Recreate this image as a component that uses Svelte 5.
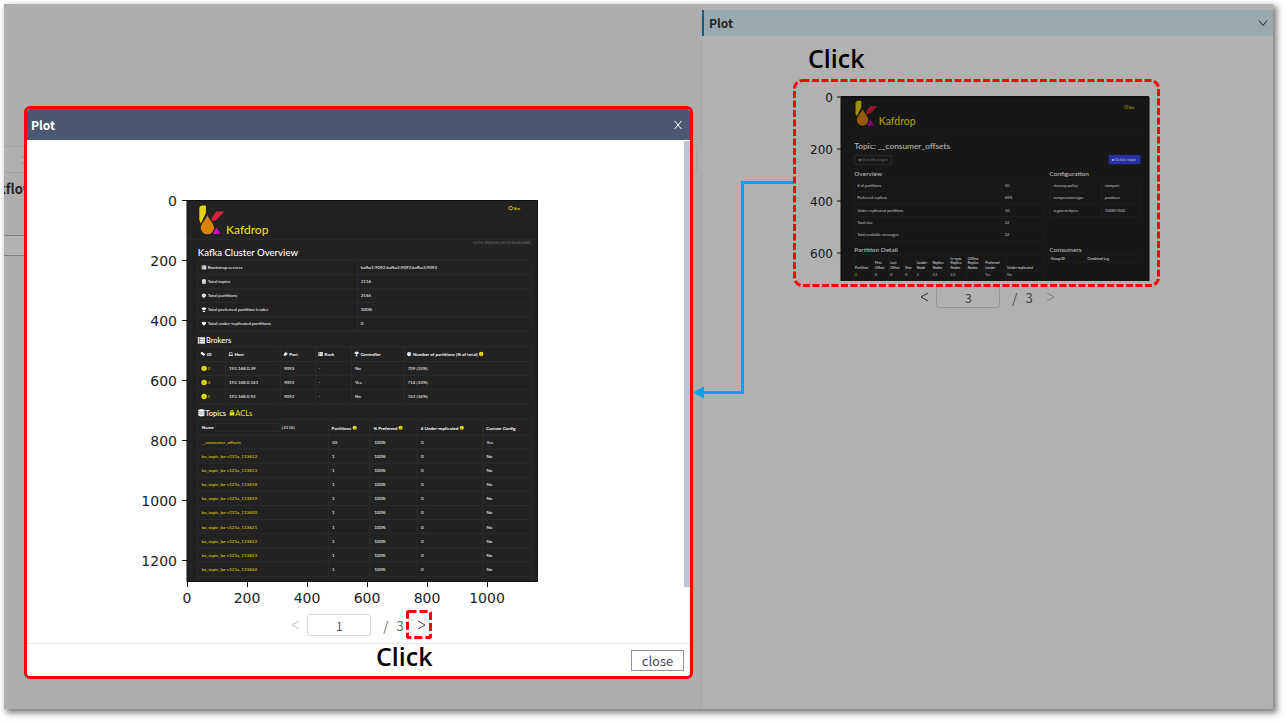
<script>
  let modalPage = $state('1');
  let panelPage = $state('3');

  const summary = [
    ['list', 'Bootstrap servers', 'kafka1:9092,kafka2:9092,kafka3:9092'],
    ['db', 'Total topics', '2116'],
    ['pie', 'Total partitions', '2165'],
    ['cup', 'Total preferred partition leader', '100%'],
    ['heart', 'Total under-replicated partitions', '0']
  ];
  const brokerHeads = [
    ['tag', 'ID', 46], ['laptop', 'Host', 138], ['plug', 'Port', 321],
    ['list', 'Rack', 438], ['cup', 'Controller', 558], ['pie', 'Number of partitions (% of total)', 733]
  ];
  const brokers = [
    ['2', '192.168.0.39', '9092', '-', 'No', '709 (33%)'],
    ['3', '192.168.0.161', '9092', '-', 'Yes', '714 (33%)'],
    ['1', '192.168.0.92', '9092', '-', 'No', '742 (34%)']
  ];
  const brokerCols = [68, 140, 323, 438, 560, 735];
  const topics = [
    ['__consumer_offsets', '50', 'Yes'],
    ...['12', '13', '18', '19', '20', '21', '22', '23', '24'].map((n) => [`ba_topic_ba-v121a_1136${n}`, '1', 'No'])
  ];
  const overview = [
    ['# of partitions', '50'],
    ['Preferred replicas', '68%'],
    ['Under-replicated partitions', '10'],
    ['Total size', '22'],
    ['Total available messages', '22']
  ];
  const config = [
    ['cleanup.policy', 'compact'],
    ['compression.type', 'producer'],
    ['segment.bytes', '104857600']
  ];
  const detailHeads = [
    [54, ['Partition']], [131, ['First', 'Offset']], [189, ['Last', 'Offset']], [247, ['Size']],
    [291, ['Leader', 'Node']], [352, ['Replica', 'Nodes']], [421, ['In-sync', 'Replica', 'Nodes']],
    [487, ['Offline', 'Replica', 'Nodes']], [554, ['Preferred', 'Leader']], [639, ['Under-replicated']]
  ];
  const detailRow = [[131, '0'], [189, '0'], [247, '0'], [291, '2'], [352, '2,3'], [421, '2,3'], [554, 'Yes'], [639, 'No']];
</script>

{#snippet chevron(d)}
  <svg class="chevron" viewBox="0 0 10 10" aria-hidden="true"><path {d} /></svg>
{/snippet}

{#snippet glyph(kind, x, y, s)}
  <g transform="translate({x} {y}) scale({s / 16})">
    {#if kind === 'list'}
      <path d="M0 1h16v14H0z" />
      <path class="cut" d="M0 5.5h16M0 10h16M4 1v14" />
    {:else if kind === 'db'}
      <path d="M1 3c0-4 14-4 14 0v10c0 4-14 4-14 0z" />
      <path class="cut" d="M1 5c2 2 12 2 14 0M1 9.5c2 2 12 2 14 0" />
    {:else if kind === 'pie'}
      <circle cx="8" cy="8" r="7.5" />
      <path class="cut" d="M8 8V0M8 8l7 3" />
    {:else if kind === 'cup'}
      <path d="M3 0h10v2h3c0 4-2 6-5 6l-2 2v3h3v3H4v-3h3v-3L5 8C2 8 0 6 0 2h3z" />
    {:else if kind === 'heart'}
      <path d="M8 15L1 8C-2 3 5-2 8 3c3-5 10 0 7 5z" />
    {:else if kind === 'tag'}
      <path d="M0 1h7l9 8-6 6-10-8z" />
    {:else if kind === 'laptop'}
      <path d="M2 2h12v9h2v3H0v-3h2zm2 2v6h8V4z" fill-rule="evenodd" />
    {:else if kind === 'plug'}
      <path d="M10 0l2 2-3 3 2 2 3-3 2 2-4 4c-1 4-5 5-8 3l-3 3-1-1 3-3c-2-3-1-7 3-8z" />
    {:else if kind === 'info'}
      <circle class="gold" cx="8" cy="8" r="8" />
      <path class="cut" d="M8 3v2M8 7v6" />
    {:else if kind === 'lock'}
      <path class="gold" d="M1 7h2V5c0-7 10-7 10 0v2h2v9H1zm5 0h4V5c0-3-4-3-4 0z" fill-rule="evenodd" />
    {/if}
  </g>
{/snippet}

{#snippet brand(dx)}
  <g transform="translate({dx} 0)">
    <path fill="#e3d600" d="M41 28Q41 20 49 18H63V43L46 78L41 66Z" />
    <path fill="#d81f3e" d="M97 38H124L101 64L83 72V58Z" />
    <path fill="#d98307" d="M68 50C73 66 90 77 90 93A22 21 0 0 1 46 93C46 77 63 66 68 50Z" />
    <path fill="#cf0ab8" d="M98 91L111 113H86Z" />
    <text class="gold title" x="130" y="113" font-size="40">Kafdrop</text>
  </g>
{/snippet}

{#snippet star(x, y)}
  <circle cx={x + 7} cy={y - 5} r="6" fill="none" stroke="#d8d000" stroke-width="3" />
  <text class="gold bold" {x} {y} dx="17" font-size="12">Star</text>
{/snippet}

<main class="page">
  <section class="workspace">
    <div class="canvas-space"></div>
    <div class="tab-strip">{@render chevron('M2 1L7 5L2 9')}</div>
    <h2>kflow</h2>
    <div class="field-row"></div>
  </section>

  <section class="side">
    <header>
      <h2>Plot</h2>
      <button aria-label="Collapse plot">{@render chevron('M1 2.5L5 7.5L9 2.5')}</button>
    </header>
    <div class="preview">
      <svg class="plot small" viewBox="800 88 376 194" role="img" aria-label="Topic page plot">
        {#each [0, 200, 400, 600] as t, i}
          <path class="tick" d="M837 {97 + i * 52}h5" />
          <text class="axis" x="833" y={102 + i * 52} text-anchor="end">{t}</text>
        {/each}
        <svg x="841" y="96" width="308" height="185" viewBox="0 0 1183 710" preserveAspectRatio="none">
          <rect class="shot" width="1183" height="710" />
          {@render brand(15)}
          {@render star(1089, 48)}
          <path class="rule" d="M0 145H1183" />
          <text class="title" x="51" y="202" font-size="32">Topic: __consumer_offsets</text>
          <rect class="outline" x="51" y="228" width="143" height="34" />
          <text class="dim" x="64" y="250" font-size="15">◉ View Messages</text>
          <rect x="1028" y="226" width="122" height="36" rx="4" fill="#3a45f0" />
          <text x="1040" y="249" font-size="15">■ Delete topic</text>
          <text class="title" x="51" y="307" font-size="25">Overview</text>
          <text class="title" x="801" y="307" font-size="25">Configuration</text>
          <path class="grid" d="M51 320H776V558H51ZM619 320V558M51 368H776M51 415H776M51 463H776M51 510H776M803 320H1150V463H803ZM1001 320V463M803 368H1150M803 415H1150" />
          {#each overview as [k, v], i}
            <text x="62" y={350 + i * 47} font-size="15">{k}</text>
            <text x="629" y={350 + i * 47} font-size="15">{v}</text>
          {/each}
          {#each config as [k, v], i}
            <text x="816" y={350 + i * 47} font-size="15">{k}</text>
            <text x="1013" y={350 + i * 47} font-size="15">{v}</text>
          {/each}
          <text class="title" x="51" y="598" font-size="25">Partition Detail</text>
          <text class="title" x="801" y="598" font-size="25">Consumers</text>
          <path class="grid" d="M51 720V610H776V720M51 672H776M126 610V710M184 610V710M242 610V710M286 610V710M347 610V710M415 610V710M482 610V710M549 610V710M633 610V710M803 610H1150V637H803Z" />
          {#each detailHeads as [x, lines]}
            {#each lines as line, i}
              <text class="bold" {x} y={664 - (lines.length - 1 - i) * 18} font-size="13">{line}</text>
            {/each}
          {/each}
          <text class="gold" x="54" y="692" font-size="13">0</text>
          {#each detailRow as [x, v]}
            <text {x} y="692" font-size="13">{v}</text>
          {/each}
          <text class="bold" x="807" y="628" font-size="13">Group ID</text>
          <text class="bold" x="947" y="628" font-size="13">Combined Lag</text>
        </svg>
        <path class="spine" d="M841 281V97H1149V281" />
      </svg>
      <nav class="pager" aria-label="Preview pages">
        <button aria-label="Previous page">{@render chevron('M8 1L1 5L8 9')}</button>
        <input aria-label="Preview page" bind:value={panelPage} />
        <span class="slash">/</span><span>3</span>
        <button aria-label="Next page" disabled>{@render chevron('M2 1L9 5L2 9')}</button>
      </nav>
    </div>
  </section>
  <div class="scrim"></div>
</main>

<div class="modal" role="dialog" aria-labelledby="plot-title">
  <header>
    <h2 id="plot-title">Plot</h2>
    <button aria-label="Close dialog">{@render chevron('M1.5 1L8.5 9M8.5 1L1.5 9')}</button>
  </header>
  <div class="body">
    <div class="thumb"></div>
    <svg class="plot large" viewBox="127 190 463 418" role="img" aria-label="Kafka cluster overview plot">
      {#each [0, 200, 400, 600, 800, 1000, 1200] as t, i}
        <path class="tick" d="M182 {200.5 + i * 60}h5" />
        <text class="axis" x="177" y={206 + i * 60} text-anchor="end">{t}</text>
      {/each}
      {#each [0, 200, 400, 600, 800, 1000] as t, i}
        <path class="tick" d="M{187.5 + i * 60} 582v5" />
        <text class="axis" x={187 + i * 60} y="603" text-anchor="middle">{t}</text>
      {/each}
      <svg x="187" y="200" width="351" height="382" viewBox="0 0 1170 1273">
        <rect class="shot" width="1170" height="1273" />
        {@render brand(0)}
        {@render star(1072, 32)}
        <path class="rule" d="M0 132H1170" />
        <text class="faint" x="1147" y="147" font-size="12" text-anchor="end">3.27.0 [2020-06-23T23:16:06.408Z]</text>
        <text class="title" x="36" y="185" font-size="32">Kafka Cluster Overview</text>
        <path class="grid" d="M36 201H1149V437H36ZM568 201V437M36 249H1149M36 296H1149M36 342H1149M36 389H1149" />
        {#each summary as [icon, k, v], i}
          {@render glyph(icon, 49, 217 + i * 47, 15)}
          <text x="69" y={230 + i * 47} font-size="15">{k}</text>
          <text x="579" y={230 + i * 47} font-size="15">{v}</text>
        {/each}

        {@render glyph('list', 36, 456, 24)}
        <text class="title" x="63" y="476" font-size="25">Brokers</text>
        <path class="grid" d="M36 489H1149V679H36ZM128 489V679M311 489V679M428 489V679M548 489V679M723 489V679M36 538H1149M36 584H1149M36 632H1149" />
        {#each brokerHeads as [icon, label, x]}
          {@render glyph(icon, x, 506, 15)}
          <text class="bold" x={x + 20} y="519" font-size="15">{label}</text>
        {/each}
        {@render glyph('info', 973, 506, 15)}
        {#each brokers as row, r}
          {@render glyph('info', 48, 552 + r * 47, 18)}
          {#each row as cell, c}
            <text class={c === 0 ? 'gold' : ''} x={brokerCols[c]} y={567 + r * 47} font-size="15">{cell}</text>
          {/each}
        {/each}

        {@render glyph('db', 36, 697, 24)}
        <text class="title" x="61" y="719" font-size="25">Topics</text>
        {@render glyph('lock', 141, 700, 18)}
        <text class="gold title" x="161" y="719" font-size="25">ACLs</text>
        <path class="grid" d="M36 1273V731H1149V1273M471 731V1273M609 731V1273M767 731V1273M986 731V1273" />
        <text class="bold" x="49" y="764" font-size="15">Name</text>
        <rect class="grid" x="94" y="744" width="217" height="28" />
        <text x="316" y="764" font-size="15">[2116]</text>
        <text class="bold" x="482" y="765" font-size="15">Partitions</text>
        {@render glyph('info', 552, 752, 14)}
        <text class="bold" x="622" y="765" font-size="15">% Preferred</text>
        {@render glyph('info', 705, 752, 14)}
        <text class="bold" x="779" y="765" font-size="15"># Under-replicated</text>
        {@render glyph('info', 909, 752, 14)}
        <text class="bold" x="997" y="765" font-size="15">Custom Config</text>
        {#each topics as [name, parts, custom], i}
          <path class="grid" d="M36 {783 + i * 47}H1149" />
          <text class="gold" x="49" y={813 + i * 47} font-size="15">{name}</text>
          <text x="483" y={813 + i * 47} font-size="15">{parts}</text>
          <text x="624" y={813 + i * 47} font-size="15">100%</text>
          <text x="780" y={813 + i * 47} font-size="15">0</text>
          <text x="998" y={813 + i * 47} font-size="15">{custom}</text>
        {/each}
        <path class="grid" d="M36 1256H1149" />
      </svg>
      <rect class="spine" x="187" y="200.5" width="350.5" height="381" />
    </svg>
    <nav class="pager" aria-label="Plot pages">
      <button aria-label="Previous page" disabled>{@render chevron('M8 1L1 5L8 9')}</button>
      <input aria-label="Plot page" bind:value={modalPage} />
      <span class="slash">/</span><span>3</span>
      <button aria-label="Next page">{@render chevron('M2 1L9 5L2 9')}</button>
    </nav>
  </div>
  <footer><button>close</button></footer>
</div>

<svg class="marks" aria-hidden="true">
  <rect class="dash" x="794.5" y="80.5" width="364" height="205" rx="8" stroke-dasharray="7 2.5" />
  <rect class="dash" x="407.5" y="611.5" width="23" height="26" rx="1" stroke-dasharray="8 3" />
  <path class="link" d="M793 182.5H742.5V392.5H700" />
  <path fill="#00a2e8" d="M693 392.5L704 386.5V398.5Z" />
</svg>
<strong class="callout first">Click</strong>
<strong class="callout second">Click</strong>

<style>
  :global(body) {
    margin: 0;
    background: #fff;
    font-family: "Noto Sans CJK KR", "Noto Sans", sans-serif;
    font-size: 13px;
    color: #333;
  }
  :global(#app) { position: relative; box-sizing: border-box; padding: 4px 13px 13px 4px; }
  h2 { margin: 0; font-size: 12px; line-height: 16px; }
  button { padding: 0; border: 0; background: none; font: inherit; color: inherit; cursor: pointer; }

  .page {
    position: relative;
    box-sizing: border-box;
    display: grid;
    grid-template-columns: 698fr 571fr;
    min-height: calc(100vh - 17px);
    box-shadow: 3px 3px 6px 1px rgba(0, 0, 0, 0.5);
  }
  .scrim { position: absolute; inset: 0; background: rgba(0, 0, 0, 0.3); }

  .workspace { border-right: 1px solid #f3f3f3; background: #fafafa; overflow: hidden; }
  .canvas-space { height: 142px; }
  .tab-strip {
    display: flex;
    align-items: center;
    height: 25px;
    margin-right: 4px;
    padding-left: 16px;
    border: solid #eaeaea;
    border-width: 1px 1px 1px 0;
    background: #fdfdfd;
    color: #ccc;
  }
  .workspace h2 { margin: 7px 0 0 -6px; font-size: 13px; line-height: 18px; }
  .field-row {
    height: 19px;
    margin: 37px 40px 0 0;
    border: solid #b4b4bd;
    border-width: 1px 0;
    background: #fff;
  }

  .side { padding-top: 6px; background: #fefefe; }
  .side header {
    display: flex;
    align-items: center;
    justify-content: space-between;
    height: 26px;
    padding: 0 5px;
    border-left: 2px solid #1c86c6;
    background: #ddf1fd;
  }
  .side header button { display: flex; }
  .preview { display: flex; flex-direction: column; align-items: center; padding-top: 52px; }

  .plot { display: block; flex: none; font-family: Lato, sans-serif; fill: #fff; }
  .plot.small { width: 376px; }
  .plot.large { width: 463px; }
  .axis { font-family: "DejaVu Sans", sans-serif; fill: #222; }
  .large .axis { font-size: 14px; }
  .small .axis { font-size: 12px; }
  .tick, .spine { fill: none; stroke: #111; stroke-width: 1; }
  .shot { fill: #222; }
  .rule, .grid, .outline { fill: none; stroke: #2e2e2e; stroke-width: 3; }
  .outline { stroke: #444; }
  .title { font-weight: 500; }
  .bold { font-weight: 700; }
  .gold { fill: #e6de00; }
  .dim { fill: #999; }
  .faint { fill: #777; }
  .cut { fill: none; stroke: #222; stroke-width: 1; }

  .chevron { display: block; width: 10px; height: 10px; fill: none; stroke: currentColor; stroke-width: 1; }

  .pager { display: flex; align-items: center; gap: 6px; height: 22px; margin-top: 4px; color: #666; }
  .pager button { display: flex; justify-content: center; width: 10px; color: #444; }
  .pager button:last-child { margin-left: 6px; }
  .pager button:disabled { color: #bbb; }
  .pager input {
    box-sizing: border-box;
    width: 64px;
    height: 22px;
    padding: 0;
    border: 1px solid #d9d9d9;
    border-radius: 3px;
    background: #fff;
    font: inherit;
    font-size: 12px;
    color: #555;
    text-align: center;
  }
  .pager .slash { margin: 0 2px 0 6px; }

  .modal {
    position: absolute;
    top: 106px;
    left: 24px;
    width: 663px;
    border: 3px solid #f00;
    border-radius: 6px;
    background: #fff;
    overflow: hidden;
  }
  .modal header {
    display: flex;
    align-items: center;
    justify-content: space-between;
    height: 31px;
    padding: 0 7px 0 4px;
    background: #4a5971;
    color: #fff;
  }
  .modal .body {
    position: relative;
    display: flex;
    flex-direction: column;
    align-items: center;
    padding: 50px 0 7px;
  }
  .modal .pager { margin-top: 6px; }
  .thumb { position: absolute; top: 1px; right: 0; width: 6px; height: 446px; background: #bfc5d6; }
  .modal footer {
    display: flex;
    justify-content: flex-end;
    padding: 6px 6px 5px;
    border-top: 1px solid #eee;
  }
  .modal footer button {
    width: 53px;
    height: 21px;
    border: 1px solid #8d93a1;
    font-size: 13px;
    line-height: 16px;
    color: #444a5a;
  }

  .marks { position: absolute; top: 0; left: 0; width: 100%; height: 100%; pointer-events: none; }
  .dash { fill: none; stroke: #f00; stroke-width: 3; }
  .link { fill: none; stroke: #00a2e8; stroke-width: 3; }
  .callout {
    position: absolute;
    font-family: "Open Sans", "Noto Sans", sans-serif;
    font-size: 25px;
    font-weight: 600;
    line-height: 32px;
    color: #000;
  }
  .first { top: 42px; left: 808px; }
  .second { top: 640px; left: 376px; }
</style>
